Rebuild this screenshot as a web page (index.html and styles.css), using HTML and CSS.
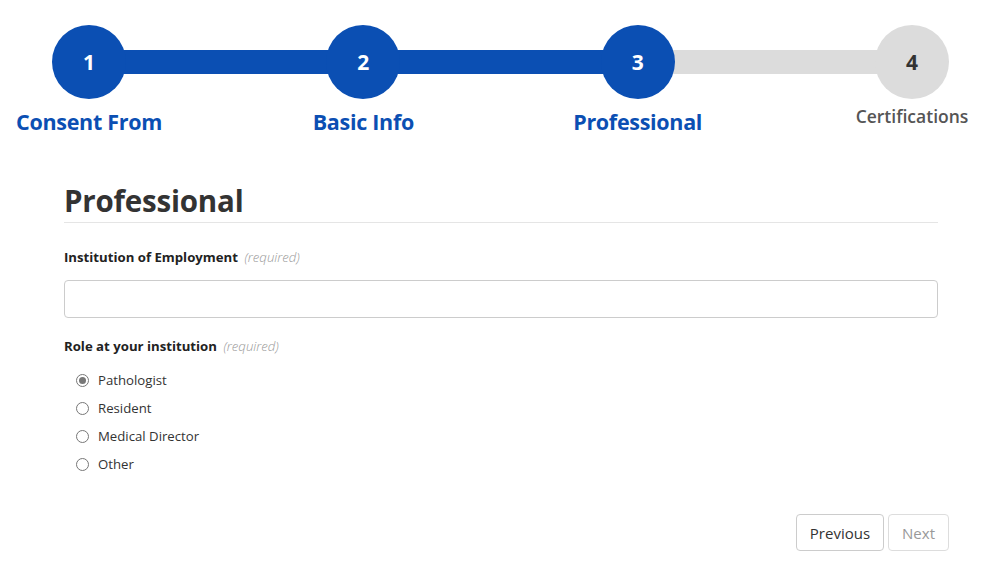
FILE: index.html
```html
<!DOCTYPE html>
<html>
<head>
<meta charset="utf-8">
<link rel="stylesheet" href="styles.css">
</head>
<body>
<div class="stepper">
  <div class="track">
    <div class="track-done"></div>
    <div class="track-todo"></div>
  </div>
  <div class="step done"><div class="circle">1</div><div class="label">Consent From</div></div>
  <div class="step done"><div class="circle">2</div><div class="label">Basic Info</div></div>
  <div class="step done"><div class="circle">3</div><div class="label">Professional</div></div>
  <div class="step todo"><div class="circle">4</div><div class="label">Certifications</div></div>
</div>

<main class="form">
  <h1 class="title">Professional</h1>
  <div class="field">
    <label class="flabel">Institution of Employment <span class="req">(required)</span></label>
    <input class="text-input" type="text">
  </div>
  <div class="field">
    <div class="flabel">Role at your institution <span class="req">(required)</span></div>
    <div class="radios">
      <label class="radio"><span class="dot checked"></span>Pathologist</label>
      <label class="radio"><span class="dot"></span>Resident</label>
      <label class="radio"><span class="dot"></span>Medical Director</label>
      <label class="radio"><span class="dot"></span>Other</label>
    </div>
  </div>
  <div class="actions">
    <button class="btn">Previous</button>
    <button class="btn disabled">Next</button>
  </div>
</main>
</body>
</html>
```
FILE: styles.css
```css
* { box-sizing: border-box; }
body {
  margin: 0;
  font-family: "Open Sans", "Noto Sans", sans-serif;
  color: #333;
  background: #fff;
}
.stepper {
  position: relative;
  display: flex;
  justify-content: space-between;
  margin: 25px 3px 0 9px;
  height: 120px;
}
.track {
  position: absolute;
  left: 80px;
  right: 80px;
  top: 25px;
  height: 24px;
  display: flex;
}
.track-done { flex: 2; background: #0b4fb3; }
.track-todo { flex: 1; background: #dcdcdc; }
.step {
  position: relative;
  width: 160px;
  display: flex;
  flex-direction: column;
  align-items: center;
}
.circle {
  width: 74px;
  height: 74px;
  border-radius: 50%;
  display: flex;
  align-items: center;
  justify-content: center;
  font-size: 21px;
  font-weight: 700;
}
.done .circle { background: #0b4fb3; color: #fff; }
.todo .circle { background: #dcdcdc; color: #333; }
.label { white-space: nowrap; font-weight: 700; }
.done .label { color: #0b4fb3; font-size: 21.5px; margin-top: 8px; letter-spacing: -0.3px; }
.todo .label { color: #555; font-size: 17.5px; margin-top: 5px; font-weight: 600; }

.form {
  margin: 36px 57px 0 64px;
}
.title {
  margin: 0;
  font-size: 29.5px;
  font-weight: 700;
  color: #333;
  line-height: 40px;
  padding-bottom: 1px;
  border-bottom: 1px solid #e5e5e5;
  letter-spacing: -0.2px;
}
.field { margin-top: 24px; }
.flabel {
  display: block;
  font-size: 13.2px;
  font-weight: 700;
  color: #222;
  line-height: 20px;
}
.req { font-weight: 300; font-style: italic; color: #999; margin-left: 3px; }
.text-input {
  display: block;
  width: 100%;
  height: 38px;
  margin-top: 13px;
  border: 1px solid #ccc;
  border-radius: 4px;
  font: inherit;
}
.field + .field { margin-top: 18px; }
.radios {
  margin-top: 14px;
  padding-left: 12px;
  display: flex;
  flex-direction: column;
  gap: 8px;
}
.radio {
  display: flex;
  align-items: center;
  font-size: 13.2px;
  color: #333;
  line-height: 20px;
}
.dot {
  width: 13px;
  height: 13px;
  border: 1px solid #777;
  border-radius: 50%;
  margin-right: 9px;
  display: flex;
  align-items: center;
  justify-content: center;
}
.dot.checked::after {
  content: "";
  width: 7px;
  height: 7px;
  border-radius: 50%;
  background: #777;
}
.actions {
  display: flex;
  justify-content: flex-end;
  gap: 4px;
  margin-top: 40px;
  margin-right: -11px;
}
.btn {
  height: 37px;
  padding: 0 13px;
  font: inherit;
  font-size: 15px;
  background: #fff;
  color: #333;
  border: 1px solid #ccc;
  border-radius: 4px;
}
.btn.disabled { color: #999; border-color: #ddd; }
```
